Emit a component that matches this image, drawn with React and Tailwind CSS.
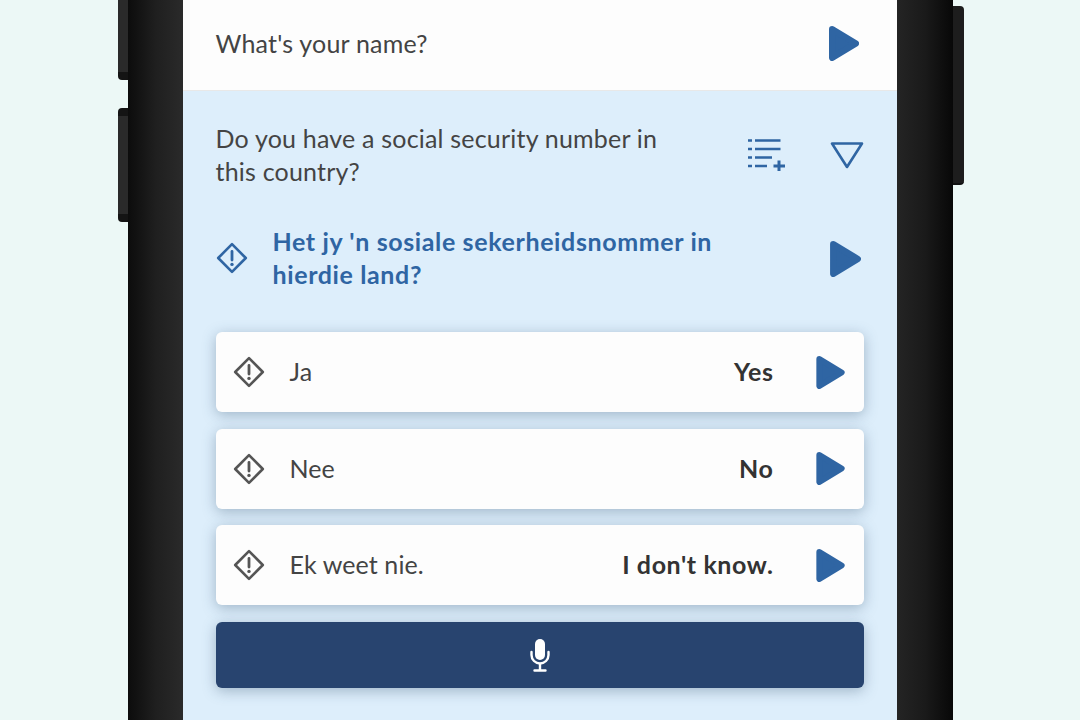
const Play = ({ className = "w-[30px] h-[35px]" }) => (
  <svg viewBox="0 0 30 35" className={className}>
    <path d="M3.2 3.2 L26.8 17.5 L3.2 31.8 Z" fill="#2f65a3" stroke="#2f65a3" strokeWidth="6.4" strokeLinejoin="round" />
  </svg>
);

const Warn = ({ color = "#555555", className = "w-[32px] h-[32px]" }) => (
  <svg viewBox="0 0 32 32" className={className} fill="none">
    <path d="M16 2.2 L29.8 16 L16 29.8 L2.2 16 Z" stroke={color} strokeWidth="2.6" strokeLinejoin="round" />
    <path d="M16 9.5 V18" stroke={color} strokeWidth="2.8" strokeLinecap="round" />
    <circle cx="16" cy="22.4" r="1.7" fill={color} />
  </svg>
);

const ListAdd = () => (
  <svg viewBox="0 0 38 32" className="w-[38px] h-[32px]" fill="none" stroke="#2f65a3" strokeWidth="2.6">
    <path d="M0 1.5 H4 M7 1.5 H32.5" />
    <path d="M0 10 H4 M7 10 H32.5" />
    <path d="M0 18.5 H4 M7 18.5 H24" />
    <path d="M0 27 H4 M7 27 H19" />
    <path d="M31 21.5 V32 M25.5 27 H37" strokeWidth="3" />
  </svg>
);

const Answer = ({ native, english }) => (
  <div className="flex items-center h-[80px] bg-[#fdfdfd] rounded-[6px] shadow-[0_3px_14px_rgba(50,80,110,0.36)] pl-[17px] pr-[19px]">
    <Warn />
    <span className="ml-[25px] text-[25px] tracking-[0.1px] text-[#444444]">{native}</span>
    <span className="ml-auto text-[25px] tracking-[0.6px] font-bold text-[#333333]">{english}</span>
    <div className="flex ml-[42px]">
      <Play className="w-[29px] h-[33px]" />
    </div>
  </div>
);

export default function App() {
  return (
    <div className="flex justify-center h-[720px] overflow-hidden bg-[#ecf8f6] font-['Lato',sans-serif]">
      {/* Phone */}
      <div className="relative w-[825px] h-full flex bg-[#1a1a1a]">
        {/* Side buttons */}
        <div className="absolute left-[-10px] top-[-10px] w-[10px] h-[90px] rounded-l-[4px] bg-[#2a2a2a] border-b-[8px] border-[#141414]" />
        <div className="absolute left-[-10px] top-[108px] w-[10px] h-[114px] rounded-l-[4px] bg-[#2a2a2a] border-y-[8px] border-[#141414]" />
        <div className="absolute right-[-11px] top-[6px] w-[11px] h-[179px] rounded-r-[4px] bg-[#1d1d1d] border-b-[2px] border-[#111111]" />

        <div className="w-[55px] bg-gradient-to-r from-[#0c0c0c] via-[#1f1f1f] to-[#2a2a2a]" />

        {/* Screen */}
        <div className="w-[714px] flex flex-col">
          <div className="h-[91px] flex items-center justify-between bg-[#fdfdfd] border-b border-[#e8e8e8] pl-[33px] pr-[38px] pb-[3px]">
            <span className="text-[25px] tracking-[0.2px] text-[#444444]">What's your name?</span>
            <Play />
          </div>

          <div className="flex-1 bg-[#ddeefb] pl-[33px] pr-[33px]">
            <div className="flex items-center justify-between pt-[31px]">
              <p className="w-[460px] text-[25px] tracking-[0.2px] leading-[33px] text-[#444444]">
                Do you have a social security number in this country?
              </p>
              <div className="flex items-center gap-[44px] mb-[1px]">
                <ListAdd />
                <svg viewBox="0 0 34 28" className="w-[34px] h-[28px]" fill="none">
                  <path d="M2 2.5 H32 L17 26 Z" stroke="#2f65a3" strokeWidth="2.6" strokeLinejoin="round" />
                </svg>
              </div>
            </div>

            <div className="flex items-center justify-between pt-[37px] pr-[3px]">
              <div className="flex items-center gap-[25px]">
                <Warn color="#2f65a3" />
                <p className="w-[470px] text-[25px] tracking-[0.62px] leading-[33px] font-bold text-[#2f65a3]">
                  Het jy 'n sosiale sekerheidsnommer in hierdie land?
                </p>
              </div>
              <div className="flex mt-[2px]">
                <Play className="w-[31px] h-[36px]" />
              </div>
            </div>

            <div className="flex flex-col gap-[16.5px] mt-[41px]">
              <Answer native="Ja" english="Yes" />
              <Answer native="Nee" english="No" />
              <Answer native="Ek weet nie." english="I don't know." />
            </div>

            <div className="flex items-center justify-center h-[66px] mt-[17px] rounded-[6px] bg-[#28446f] shadow-[0_3px_14px_rgba(50,80,110,0.36)]">
              <svg viewBox="0 0 24 36" className="w-[24px] h-[36px]" fill="none" stroke="#ffffff">
                <rect x="7" y="2" width="10" height="21" rx="5" fill="#ffffff" stroke="none" />
                <path d="M3.5 15 V18 A8.5 8.5 0 0 0 20.5 18 V15" strokeWidth="2.4" strokeLinecap="round" />
                <path d="M12 27 V33 M6.5 33.5 H17.5" strokeWidth="2.4" strokeLinecap="round" />
              </svg>
            </div>
          </div>
        </div>

        <div className="w-[56px] bg-gradient-to-r from-[#242424] via-[#1a1a1a] to-[#080808]" />
      </div>
    </div>
  );
}
